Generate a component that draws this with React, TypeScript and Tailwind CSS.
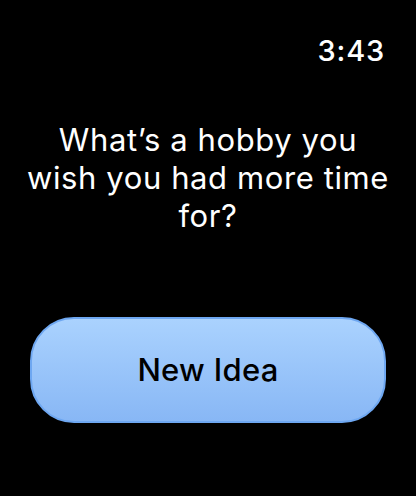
export default function App() {
  return (
    <div
      className="w-[416px] h-[496px] bg-black text-white flex flex-col overflow-hidden"
      style={{ fontFamily: 'Inter, "Noto Sans", sans-serif' }}
    >
      {/* Status bar */}
      <div className="flex justify-end pt-[33px] pr-[31px] h-[72px]">
        <span className="text-[29px] leading-[36px] font-medium tracking-[0.8px]">3:43</span>
      </div>

      {/* Prompt */}
      <div className="pt-[49px] px-[20px] text-center">
        <p className="text-[31px] leading-[38px] font-normal tracking-[0.6px]">
          What’s a hobby you
          <br />
          wish you had more time
          <br />
          for?
        </p>
      </div>

      {/* Action */}
      <div className="px-[30px] pt-[82px]">
        <button className="w-full h-[106px] rounded-[44px] bg-gradient-to-b from-[#aad2fe] to-[#88b7f5] border-2 border-[#6ea7f1] text-black text-[31px] font-medium tracking-[0.3px]">
          New Idea
        </button>
      </div>
    </div>
  );
}
